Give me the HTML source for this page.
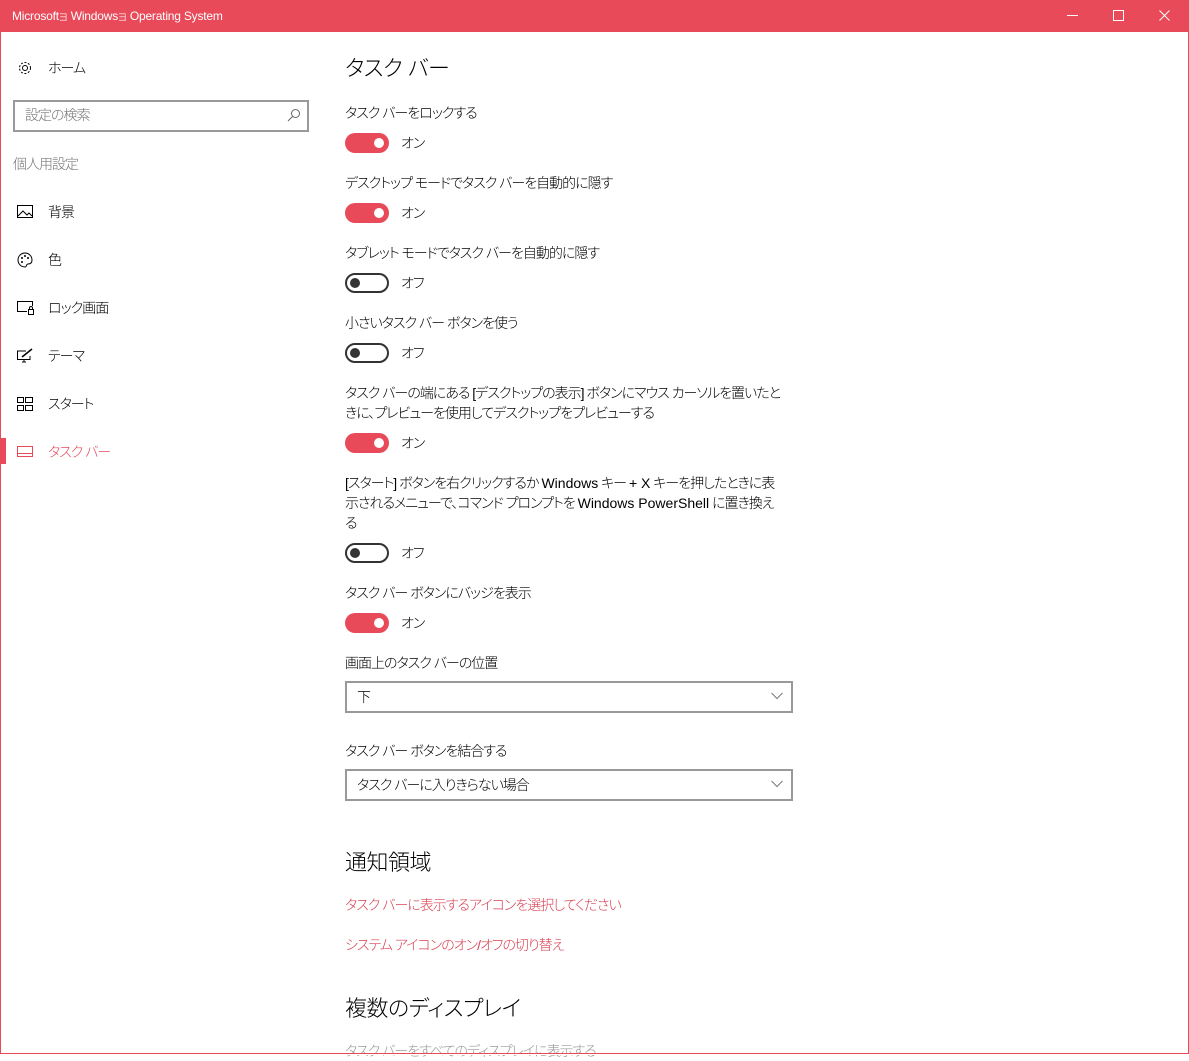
<!DOCTYPE html>
<html><head><meta charset="utf-8"><style>
*{margin:0;padding:0;box-sizing:border-box}
body{width:1189px;height:1055px;overflow:hidden;background:#fff;font-family:"Liberation Sans","Noto Sans CJK JP",sans-serif;font-size:14px;color:#000;position:relative;font-feature-settings:"palt";font-weight:300}
.a{position:absolute;white-space:nowrap;line-height:20px;letter-spacing:-1px}
.l{letter-spacing:0}
#tb{position:absolute;left:0;top:0;width:1189px;height:32px;background:#e84a5a;color:#fff;font-size:12px}
#tb .a{letter-spacing:-0.2px}
#frame{position:absolute;left:0;top:32px;width:1189px;height:1023px;border:1px solid #e84a5a;border-top:0}
.tg{position:absolute;width:44px;height:20px;border-radius:10px}
.on{background:#e84a5a}
.on::after{content:"";position:absolute;right:5px;top:5px;width:10px;height:10px;border-radius:5px;background:#fff}
.off{border:2px solid #333}
.off::after{content:"";position:absolute;left:3px;top:3px;width:10px;height:10px;border-radius:5px;background:#333}
.dd{position:absolute;left:345px;width:448px;height:32px;border:2px solid #999}
.dd span{position:absolute;left:10px;top:4px;line-height:20px;letter-spacing:-1px}
.dd svg{position:absolute;right:8px;top:9px}
.h{position:absolute;font-size:22px;line-height:30px;font-weight:300;white-space:nowrap;letter-spacing:-0.5px}
.lk{color:#d93f50}
</style></head><body>
<div id="tb"><span class="a" style="left:12px;top:6px;font-size:12px">Microsoftョ Windowsョ Operating System</span>
<svg style="position:absolute;left:1067px;top:15px" width="12" height="2"><rect width="11" height="1" fill="#fff"/></svg>
<svg style="position:absolute;left:1113px;top:10px" width="12" height="12"><rect x="0.5" y="0.5" width="10" height="10" fill="none" stroke="#fff"/></svg>
<svg style="position:absolute;left:1159px;top:10px" width="12" height="12"><path d="M0.5 0.5L10.5 10.5M10.5 0.5L0.5 10.5" stroke="#fff"/></svg>
</div>
<div id="frame"></div>

<svg style="position:absolute;left:17px;top:60px" width="16" height="16" viewBox="0 0 16 16"><circle cx="8" cy="8" r="2.5" fill="none" stroke="#000"/><circle cx="8" cy="8" r="5.5" fill="none" stroke="#000" stroke-dasharray="2 1.6"/></svg>
<div class="a" style="left:48px;top:58px">ホーム</div>
<div style="position:absolute;left:13px;top:100px;width:296px;height:32px;border:2px solid #999"></div>
<div class="a" style="left:25px;top:105px;color:#777">設定の検索</div>
<svg style="position:absolute;left:287px;top:108px" width="14" height="14"><circle cx="8.5" cy="5.5" r="4" fill="none" stroke="#666"/><path d="M5.5 8.5L1 13" stroke="#666"/></svg>
<div class="a" style="left:13px;top:154px;color:#777;font-size:14px">個人用設定</div>

<svg style="position:absolute;left:17px;top:205px" width="16" height="14"><rect x="0.5" y="0.5" width="15" height="12" fill="none" stroke="#000"/><path d="M1 11L6 6L10 10L12 8L15 11" fill="none" stroke="#000"/></svg>
<div class="a" style="left:48px;top:202px">背景</div>
<svg style="position:absolute;left:17px;top:252px" width="16" height="16"><path d="M8 1A7 7 0 1 0 8 15C10 15 9 12 11 12C14 12 15 10 15 8A7 7 0 0 0 8 1Z" fill="none" stroke="#000"/><circle cx="5" cy="6" r="1" fill="#000"/><circle cx="8" cy="4" r="1" fill="#000"/><circle cx="11" cy="6" r="1" fill="#000"/><circle cx="5" cy="10" r="1" fill="#000"/></svg>
<div class="a" style="left:48px;top:250px">色</div>
<svg style="position:absolute;left:17px;top:301px" width="17" height="14"><path d="M10 10.5H0.5V0.5H15.5V5" fill="none" stroke="#000"/><rect x="11.5" y="8.5" width="5" height="5" fill="none" stroke="#000"/><path d="M12.5 8.5V7A1.5 1.5 0 0 1 15.5 7V8.5" fill="none" stroke="#000"/></svg>
<div class="a" style="left:48px;top:298px">ロック画面</div>
<svg style="position:absolute;left:17px;top:348px" width="17" height="16"><path d="M9 3H0.5V11.5H13V8" fill="none" stroke="#000"/><path d="M5 14H9M7 11.5V14" stroke="#000"/><path d="M5 9L15 1" stroke="#000" stroke-width="1.5"/></svg>
<div class="a" style="left:48px;top:346px">テーマ</div>
<svg style="position:absolute;left:17px;top:397px" width="17" height="14"><rect x="0.5" y="0.5" width="6" height="5" fill="none" stroke="#000"/><rect x="8.5" y="0.5" width="7" height="5" fill="none" stroke="#000"/><rect x="0.5" y="8.5" width="6" height="5" fill="none" stroke="#000"/><rect x="8.5" y="8.5" width="7" height="5" fill="none" stroke="#000"/></svg>
<div class="a" style="left:48px;top:394px">スタート</div>
<div style="position:absolute;left:1px;top:438px;width:5px;height:26px;background:#e84a5a"></div>
<svg style="position:absolute;left:17px;top:446px" width="17" height="11"><rect x="0.5" y="0.5" width="15" height="10" fill="none" stroke="#e84a5a"/><path d="M0.5 7.5H15.5" stroke="#e84a5a"/></svg>
<div class="a lk" style="left:48px;top:442px;color:#e84a5a">タスク バー</div>

<div class="h" style="left:345px;top:54px">タスク バー</div>

<div class="a" style="left:345px;top:103px">タスク バーをロックする</div>
<div class="tg on" style="left:345px;top:133px"></div><div class="a" style="left:401px;top:133px">オン</div>
<div class="a" style="left:345px;top:173px">デスクトップ モードでタスク バーを自動的に隠す</div>
<div class="tg on" style="left:345px;top:203px"></div><div class="a" style="left:401px;top:203px">オン</div>
<div class="a" style="left:345px;top:243px">タブレット モードでタスク バーを自動的に隠す</div>
<div class="tg off" style="left:345px;top:273px"></div><div class="a" style="left:401px;top:273px">オフ</div>
<div class="a" style="left:345px;top:313px">小さいタスク バー ボタンを使う</div>
<div class="tg off" style="left:345px;top:343px"></div><div class="a" style="left:401px;top:343px">オフ</div>
<div class="a" style="left:345px;top:383px">タスク バーの端にある [デスクトップの表示] ボタンにマウス カーソルを置いたと<br>きに、プレビューを使用してデスクトップをプレビューする</div>
<div class="tg on" style="left:345px;top:433px"></div><div class="a" style="left:401px;top:433px">オン</div>
<div class="a" style="left:345px;top:473px">[スタート] ボタンを右クリックするか <span class="l">Windows</span> キー <span class="l">+ X</span> キーを押したときに表<br>示されるメニューで、コマンド プロンプトを <span class="l">Windows PowerShell</span> に置き換え<br>る</div>
<div class="tg off" style="left:345px;top:543px"></div><div class="a" style="left:401px;top:543px">オフ</div>
<div class="a" style="left:345px;top:583px">タスク バー ボタンにバッジを表示</div>
<div class="tg on" style="left:345px;top:613px"></div><div class="a" style="left:401px;top:613px">オン</div>
<div class="a" style="left:345px;top:653px">画面上のタスク バーの位置</div>
<div class="dd" style="top:681px"><span>下</span><svg width="12" height="8"><path d="M0.5 1L6 6.5L11.5 1" fill="none" stroke="#777"/></svg></div>
<div class="a" style="left:345px;top:741px">タスク バー ボタンを結合する</div>
<div class="dd" style="top:769px"><span>タスク バーに入りきらない場合</span><svg width="12" height="8"><path d="M0.5 1L6 6.5L11.5 1" fill="none" stroke="#777"/></svg></div>

<div class="h" style="left:345px;top:848px">通知領域</div>
<div class="a lk" style="left:345px;top:895px">タスク バーに表示するアイコンを選択してください</div>
<div class="a lk" style="left:345px;top:935px">システム アイコンのオン/オフの切り替え</div>
<div class="h" style="left:345px;top:994px">複数のディスプレイ</div>
<div class="a" style="left:345px;top:1041px;color:#999">タスク バーをすべてのディスプレイに表示する</div>
<div style="position:absolute;left:0;top:1053px;width:1189px;height:2px;background:#fff"></div>
<div style="position:absolute;left:0;top:1053px;width:1189px;height:1px;background:#e84a5a"></div>
</body></html>
